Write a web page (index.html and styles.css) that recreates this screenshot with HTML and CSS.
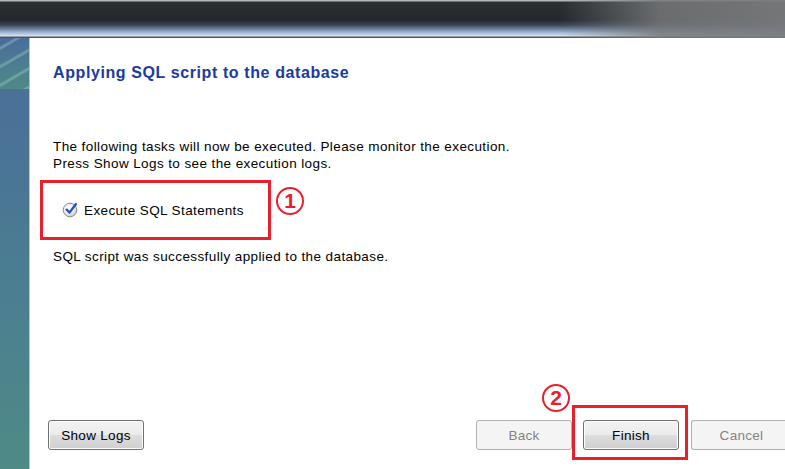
FILE: index.html
```html
<!DOCTYPE html>
<html>
<head>
<meta charset="utf-8">
<link rel="stylesheet" href="styles.css">
</head>
<body>
<div class="window">
  <div class="titlebar"></div>
  <div class="body">
    <div class="sidebar"><div class="sidebar-top"></div></div>
    <div class="main">
      <h1 class="heading">Applying SQL script to the database</h1>
      <p class="intro">The following tasks will now be executed. Please monitor the execution.<br>Press Show Logs to see the execution logs.</p>
      <div class="task-wrap">
        <div class="task-box">
          <svg class="check" width="17" height="17" viewBox="0 0 17 17">
            <defs>
              <radialGradient id="cg" cx="0.4" cy="0.35" r="0.7">
                <stop offset="0" stop-color="#ffffff"/>
                <stop offset="0.7" stop-color="#e4e4e4"/>
                <stop offset="1" stop-color="#b8b8b8"/>
              </radialGradient>
            </defs>
            <circle cx="8" cy="9" r="6.8" fill="url(#cg)" stroke="#8a8a8a" stroke-width="1"/>
            <path d="M4.6 8.6 L7.4 11.6 L14 3" fill="none" stroke="#1f4fc4" stroke-width="2.2" stroke-linecap="round" stroke-linejoin="round"/>
          </svg>
          <span class="task-label">Execute SQL Statements</span>
        </div>
        <span class="badge badge-1">1</span>
      </div>
      <p class="result">SQL script was successfully applied to the database.</p>
      <div class="footer">
        <button class="btn">Show Logs</button>
        <div class="spacer"></div>
        <button class="btn btn-disabled">Back</button>
        <div class="finish-wrap">
          <button class="btn">Finish</button>
          <span class="badge badge-2">2</span>
        </div>
        <button class="btn btn-disabled btn-cancel">Cancel</button>
      </div>
    </div>
  </div>
</div>
</body>
</html>
```
FILE: styles.css
```css
*, *::before, *::after { box-sizing: border-box; }
html, body {
  margin: 0;
  padding: 0;
  width: 785px;
  height: 469px;
  overflow: hidden;
  background: #fff;
  font-family: "Liberation Sans", Arial, sans-serif;
}
.window {
  display: flex;
  flex-direction: column;
  height: 469px;
}
.titlebar {
  height: 38px;
  flex: none;
  background:
    linear-gradient(90deg, rgba(120,122,124,0) 0px, rgba(120,122,124,0) 560px, rgba(118,120,122,0.85) 660px, rgba(120,122,124,0.95) 785px),
    linear-gradient(180deg, #b7b7b7 0px, #b7b7b7 1px, #2a2f33 2px, #23282c 20px, #3a4554 25px, #7890ad 30px, #a8c0dc 33px, #c4d4e6 35px, #dfe6ee 36px, #5a5a5a 37px, #4a4a4a 38px);
}
.body {
  flex: 1;
  display: flex;
  min-height: 0;
}
.sidebar {
  width: 30px;
  flex: none;
  border-right: 1px solid #a9c8d6;
  background: linear-gradient(180deg, #4a6e9a 0px, #4a7496 120px, #4b7f90 260px, #4f8a86 431px);
  display: flex;
  flex-direction: column;
}
.sidebar-top {
  height: 51px;
  background:
    repeating-linear-gradient(150deg, rgba(255,255,255,0) 0px, rgba(255,255,255,0) 7px, rgba(170,210,200,0.35) 8px, rgba(170,210,200,0.35) 10px, rgba(255,255,255,0) 11px, rgba(255,255,255,0) 16px),
    linear-gradient(180deg, #4a6c9c 0px, #4c7c92 25px, #4e8a86 51px);
}
.main {
  flex: 1;
  display: flex;
  flex-direction: column;
  padding: 25px 0 19px 23px;
  color: #000;
  font-size: 13.5px;
  letter-spacing: 0.4px;
}
.heading {
  margin: 0;
  font-size: 16px;
  font-weight: bold;
  color: #1b3aa0;
  line-height: 20px;
  letter-spacing: 0.6px;
}
.intro {
  margin: 55px 0 0 0;
  line-height: 17px;
}
.task-wrap {
  display: flex;
  align-items: flex-start;
  margin: 8px 0 0 -13px;
}
.task-box {
  width: 231px;
  height: 60px;
  border: 3px solid #e8202c;
  display: flex;
  align-items: center;
  padding-left: 19px;
  gap: 5px;
}
.check { display: block; margin-top: -1px; }
.badge {
  width: 28px;
  height: 28px;
  border: 2px solid #e8202c;
  border-radius: 50%;
  color: #e8202c;
  font-weight: bold;
  font-size: 21px;
  line-height: 24px;
  text-align: center;
  letter-spacing: 0;
  font-family: "Liberation Sans", Arial, sans-serif;
  background: #fff;
}
.badge-1 { margin: 7px 0 0 5px; }
.result {
  margin: 8px 0 0 0;
  line-height: 17px;
}
.footer {
  margin-top: auto;
  display: flex;
  align-items: center;
  margin-left: -5px;
}
.spacer { flex: 1; }
.btn {
  width: 96px;
  height: 30px;
  border: 1px solid #707070;
  border-radius: 3px;
  background: linear-gradient(180deg, #f3f3f3 0%, #ebebeb 50%, #dddddd 51%, #cfcfcf 100%);
  font-family: "Liberation Sans", Arial, sans-serif;
  font-size: 13.5px;
  letter-spacing: 0.3px;
  color: #000;
  padding: 0;
  box-shadow: inset 0 0 0 1px #fcfcfc;
}
.btn-disabled {
  border-color: #adb2b5;
  background: #f4f4f4;
  color: #838383;
  box-shadow: none;
}
.finish-wrap {
  position: relative;
  margin-left: 11px;
  margin-right: 12px;
}
.finish-wrap .btn { display: block; }
.finish-wrap::before {
  content: "";
  position: absolute;
  left: -11px;
  top: -15px;
  width: 116px;
  height: 55px;
  border: 3px solid #e8202c;
  pointer-events: none;
}
.badge-2 {
  position: absolute;
  left: -41px;
  top: -36px;
}
.btn-cancel {
  width: 100px;
  margin-right: -6px;
  border-right: none;
  border-radius: 3px 0 0 3px;
}
```
